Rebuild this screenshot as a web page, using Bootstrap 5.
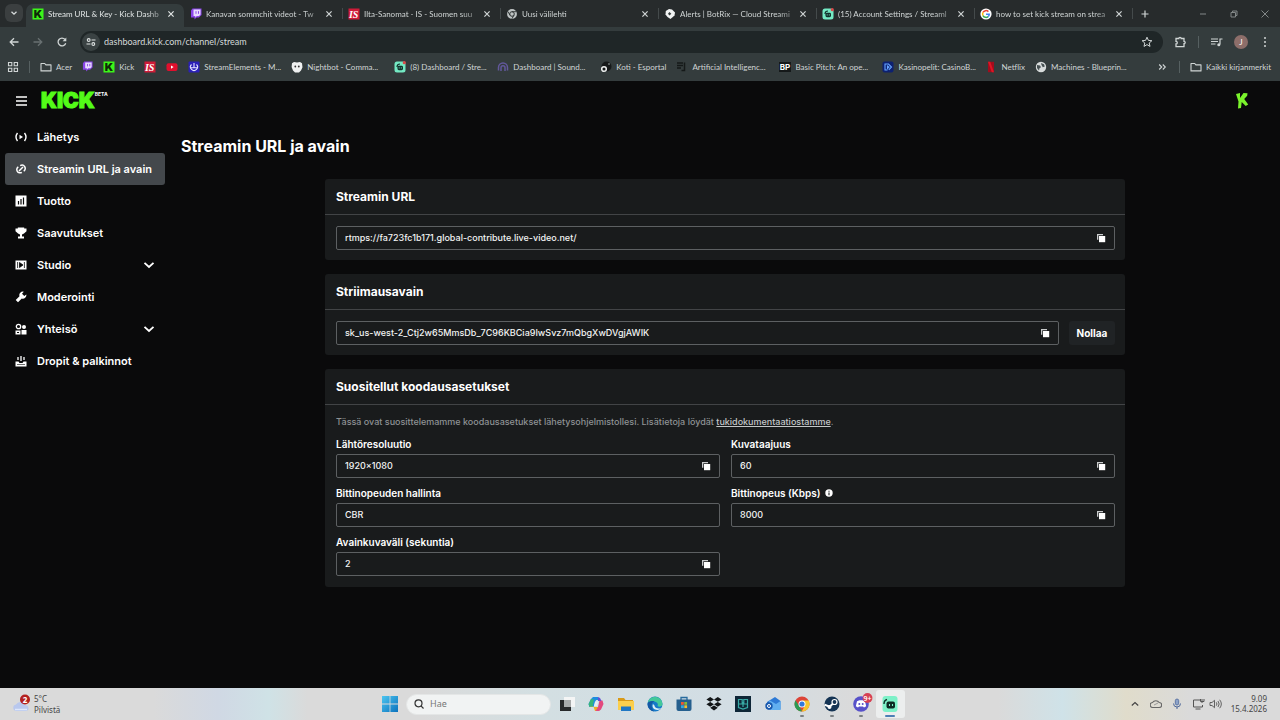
<!DOCTYPE html>
<html lang="fi" data-bs-theme="dark">
<head>
<meta charset="utf-8">
<meta name="viewport" content="width=device-width, initial-scale=1">
<title>Stream URL &amp; Key - Kick Dashboard</title>
<link href="https://cdn.jsdelivr.net/npm/bootstrap@5.3.0/dist/css/bootstrap.min.css" rel="stylesheet">
<style>
  :root { --chrome-font: Lato, "Noto Sans", sans-serif; --ui-font: Inter, "Liberation Sans", sans-serif; }
  body { background: #0a0a0b; color: #fff; font-family: var(--ui-font); font-size: 12px; line-height: 16px; }
  svg { display: block; flex: none; }
  button { background: none; border: 0; padding: 0; color: inherit; }
  a { color: inherit; text-decoration: none; }

  /* Browser window */
  .browser { font-family: var(--chrome-font); font-size: 8px; line-height: 14px; color: #d0d5d5; background: #343c3d; }
  .tabstrip { background: #272b2c; height: 27px; padding-left: 5px; }
  .tab-search { width: 18px; height: 18px; border-radius: 6px; background: #3b3f40; margin-right: 3px; }
  .browser-tab { flex: 0 1 158px; height: 23px; padding: 0 7px 4px 6px; gap: 4px; margin-top: 4px; position: relative; min-width: 0; }
  .browser-tab + .browser-tab:not(.after-active)::before,
  .new-tab::before { content: ""; position: absolute; left: 0; top: 4px; height: 11px; width: 1px; background: #444a4b; }
  .browser-tab.current { background: #343c3d; border-radius: 7px 7px 0 0; color: #e2e6e6; }
  .tab-title { flex: 1; min-width: 0; overflow: hidden; white-space: nowrap; -webkit-mask-image: linear-gradient(90deg, #000 86%, #0006); mask-image: linear-gradient(90deg, #000 86%, #0006); }
  .new-tab { position: relative; width: 25px; height: 19px; margin-top: 4px; }
  .win-controls { color: #838888; gap: 19px; padding-right: 9px; height: 27px; }
  .toolbar-row { height: 30px; padding: 0 9px 0 8px; }
  .nav-btns { gap: 12px; width: 72px; }
  .omnibox { height: 22px; border-radius: 11px; background: #1f2627; gap: 4px; padding: 0 10px 0 2px; }
  .omnibox input { background: none; border: 0; outline: 0; padding: 0; color: #d5dada; font-size: 9px; flex: 1; min-width: 0; }
  .site-info { width: 18px; height: 18px; border-radius: 50%; background: #3a4243; }
  .toolbar-end { gap: 11px; padding-left: 11px; }
  .v-rule { width: 1px; height: 12px; background: #566061; }
  .profile { width: 14px; height: 14px; border-radius: 50%; background: #8d6e6a; color: #fff; font-size: 8px; }
  .bookmarks { height: 24px; padding: 0 9px 5px 7px; white-space: nowrap; }
  .bm { display: flex; align-items: center; gap: 4px; flex: none; margin-right: 10px; }
  .bm-icon { margin-right: 10px; }
  .bm-long { width: 103px; margin-right: 0; }

  /* Kick dashboard */
  .dash-top { height: 40px; padding: 0 30px 0 16px; }
  .brand { font-weight: 900; font-size: 21px; line-height: 20px; color: #53fc18; -webkit-text-stroke: 1px #53fc18; margin-left: 14px; }
  .beta { font-size: 5px; line-height: 6px; font-weight: 700; margin-top: 10px; }
  .side { width: 170px; padding: 0 5px; flex: none; }
  .side-link { display: flex; align-items: center; gap: 10px; height: 32px; width: 100%; padding: 0 10px; border-radius: 3px; font-size: 11px; font-weight: 600; white-space: nowrap; }
  .side-link.active { background: #44484c; }
  .page { padding: 14px 0 0 11px; min-width: 0; }
  .page h1 { font-size: 16px; line-height: 22px; font-weight: 700; margin: 0 0 22px; }
  .panel-wrap { padding-right: 11px; }
  .panels { max-width: 800px; gap: 14px; margin: 0 auto; }
  .panel { background: #191b1c; border-radius: 3px; }
  .panel-head { height: 36px; border-bottom: 1px solid #424446; padding: 0 11px; }
  .panel-head h2 { font-size: 12px; line-height: 16px; font-weight: 700; margin: 0; }
  .panel-body { padding: 11px 10px 10px 11px; }
  .field { height: 24px; border: 1px solid #5d6062; border-radius: 2px; padding: 0 8px; }
  .field input { flex: 1; min-width: 0; background: none; border: 0; outline: 0; padding: 0; color: #f2f3f3; font-size: 9px; line-height: 14px; font-weight: 500; }
  .key-row { display: flex; gap: 10px; }
  .reset-btn { width: 46px; height: 24px; border-radius: 3px; background: #202325; font-size: 10px; font-weight: 700; }
  .hint { font-size: 9px; line-height: 12px; font-weight: 500; color: #8e9294; margin: 0 0 10px; }
  .hint a { color: #c4c7c8; text-decoration: underline; }
  .settings { display: grid; grid-template-columns: 1fr 1fr; gap: 9px 11px; padding-bottom: 1px; }
  .settings label { display: flex; align-items: center; gap: 4px; font-size: 10px; line-height: 12px; font-weight: 600; margin-bottom: 4px; }

  /* Windows taskbar */
  .taskbar { height: 32px; font-family: "Noto Sans", sans-serif; color: #454545; display: grid; grid-template-columns: 1fr auto 1fr; align-items: center;
    background: linear-gradient(90deg, #dadada 0, #dadada 12%, #d0d8e4 17%, #cfe2e6 21%, #dadada 24%, #dadada 33%, #d3dfe2 42%, #d2dde4 58%, #dadada 67%, #dadada 78%, #cfe2e8 83%, #e0dccb 88%, #dadada 93%); }
  .weather { padding-left: 12px; gap: 4px; font-size: 8px; line-height: 11px; }
  .task-search { width: 145px; height: 21px; border-radius: 11px; background: #f1f3f3; border: 1px solid #e4e6e6; padding: 0 7px; gap: 6px; margin: 0 1px 0 2px; }
  .task-search input { background: none; border: 0; outline: 0; padding: 0; font-size: 9px; line-height: 14px; color: #555; width: 100px; }
  .task-search input::placeholder { color: #777; opacity: 1; }
  .apps { width: 353px; }
  .app-btn { flex: 1; height: 28px; display: flex; align-items: center; justify-content: center; position: relative; }
  .app-btn.running::after { content: ""; position: absolute; bottom: 1px; width: 4px; height: 2px; border-radius: 1px; background: #7b8083; }
  .app-btn.focused { background: #eceeee; border-radius: 3px; }
  .app-btn.focused::after { width: 10px; background: #4d7fb5; }
  .start-btn { width: 29px; height: 28px; }
  .tray { gap: 9px; padding-right: 13px; }
  .clock { font-size: 8px; line-height: 10px; }
</style>
</head>
<body class="d-flex flex-column min-vh-100">

<svg width="0" height="0" class="position-absolute" aria-hidden="true">
  <symbol id="i-x" viewBox="0 0 12 12"><path d="M3.400 3.400l5.200 5.200M8.600 3.400L3.400 8.600" stroke="currentColor" stroke-width="1.200"/></symbol>
  <symbol id="i-folder" viewBox="0 0 12 12"><path d="M1 2.500h3.700l1.200 1.400H11v6H1z" fill="none" stroke="currentColor" stroke-width="1.100" stroke-linejoin="round"/></symbol>
  <symbol id="i-twitch" viewBox="0 0 12 12"><path d="M2.500.5H11.500V7L8.800 9.500H6.500L4.500 11.500V9.500H1V2.500z" fill="#8a45e8"/><path d="M3.500 1.500h7v5L9 8H6.800L5.300 9.400V8H3.500z" fill="#e9dcff"/><path d="M6 3.200v2.600M8.500 3.200v2.600" stroke="#8a45e8"/></symbol>
  <symbol id="i-slabs" viewBox="0 0 12 12"><rect x=".5" y=".5" width="11" height="11" rx="2.500" fill="#74eac4"/><path d="M3 6c0-2 1.200-3 3-3" fill="none" stroke="#12312c" stroke-width="1.200"/><rect x="3.500" y="4.800" width="5.500" height="4.400" rx="1.400" fill="#12312c"/><path d="M5.200 6.300v1.200M7.300 6.300v1.200" stroke="#74eac4" stroke-width=".8"/><circle cx="10.300" cy="1.700" r="1.600" fill="#d94a4a"/></symbol>
  <symbol id="i-copy" viewBox="0 0 10 10"><path d="M1 6.800V1h6v1.200H2.300v4.600z" fill="#c9cbcc"/><rect x="3" y="3" width="6.200" height="6.200" fill="#fff"/></symbol>
  <symbol id="i-chev" viewBox="0 0 12 12"><path d="M1.500 3.800L6 8l4.500-4.200" fill="none" stroke="#fff" stroke-width="1.800"/></symbol>
</svg>

<header class="browser">
  <div class="tabstrip d-flex align-items-start">
    <button class="tab-search d-flex align-items-center justify-content-center mt-1" aria-label="Hae välilehdistä"><svg width="8" height="8" viewBox="0 0 8 8"><path d="M1.500 2.800L4 5.200l2.500-2.400" fill="none" stroke="#d8dcdc" stroke-width="1.300"/></svg></button>
    <a href="#" class="browser-tab current d-flex align-items-center"><svg width="12" height="12" viewBox="0 0 12 12"><rect x=".5" y=".5" width="11" height="11" fill="#3cf51a"/><text x="6" y="10" text-anchor="middle" font-family="Inter" font-weight="900" font-size="11" fill="#102808">K</text></svg><span class="tab-title">Stream URL &amp; Key - Kick Dashb</span><svg width="12" height="12"><use href="#i-x"/></svg></a>
    <a href="#" class="browser-tab after-active d-flex align-items-center"><svg width="12" height="12"><use href="#i-twitch"/></svg><span class="tab-title">Kanavan sommchit videot - Tw</span><svg width="12" height="12"><use href="#i-x"/></svg></a>
    <a href="#" class="browser-tab d-flex align-items-center"><svg width="12" height="12" viewBox="0 0 12 12"><rect x=".5" y=".5" width="11" height="11" fill="#cf1b38"/><text x="5.700" y="9.600" text-anchor="middle" font-family="Liberation Serif" font-style="italic" font-weight="700" font-size="10" fill="#fff">IS</text></svg><span class="tab-title">Ilta-Sanomat - IS - Suomen suu</span><svg width="12" height="12"><use href="#i-x"/></svg></a>
    <a href="#" class="browser-tab d-flex align-items-center"><svg width="12" height="12" viewBox="0 0 12 12"><circle cx="6" cy="6" r="4.900" fill="#bfc4c4"/><circle cx="6" cy="6" r="2.300" fill="#bfc4c4" stroke="#2d3232"/><path d="M6 3.700h4.300M4 7.200L1.900 3.500M8 7.200l-2.200 3.700" stroke="#2d3232" stroke-width=".9"/></svg><span class="tab-title">Uusi välilehti</span><svg width="12" height="12"><use href="#i-x"/></svg></a>
    <a href="#" class="browser-tab d-flex align-items-center"><svg width="12" height="12" viewBox="0 0 12 12"><path d="M5 1l3 .6 3 3-.5 3L6.500 11 3.500 9 1.500 6.500 1.800 3z" fill="#f1f3f3"/><path d="M5.500 4l1.800 1.800L5.500 7.500 4 5.800z" fill="#343a3a"/></svg><span class="tab-title">Alerts | BotRix — Cloud Streami</span><svg width="12" height="12"><use href="#i-x"/></svg></a>
    <a href="#" class="browser-tab d-flex align-items-center"><svg width="12" height="12"><use href="#i-slabs"/></svg><span class="tab-title">(15) Account Settings / Streaml</span><svg width="12" height="12"><use href="#i-x"/></svg></a>
    <a href="#" class="browser-tab d-flex align-items-center"><svg width="12" height="12" viewBox="0 0 12 12"><circle cx="6" cy="6" r="5.600" fill="#fff"/><g fill="none" stroke-width="1.500"><path d="M8.400 3.600A3.400 3.400 0 0 0 3 4.400" stroke="#ea4335"/><path d="M3 4.400a3.400 3.400 0 0 0 0 3.200" stroke="#fbbc05"/><path d="M3 7.600a3.400 3.400 0 0 0 5.200 1" stroke="#34a853"/><path d="M8.200 8.600A3.400 3.400 0 0 0 9.300 6.200H6" stroke="#4285f4"/></g></svg><span class="tab-title">how to set kick stream on strea</span><svg width="12" height="12"><use href="#i-x"/></svg></a>
    <button class="new-tab d-flex align-items-center justify-content-center" aria-label="Uusi välilehti"><svg width="10" height="10" viewBox="0 0 10 10"><path d="M5 1.500v7M1.500 5h7" stroke="currentColor" stroke-width="1.200"/></svg></button>
    <div class="win-controls d-flex align-items-center ms-auto">
      <button aria-label="Pienennä"><svg width="12" height="12" viewBox="0 0 12 12"><path d="M3 6h6" stroke="currentColor"/></svg></button>
      <button aria-label="Palauta"><svg width="12" height="12" viewBox="0 0 12 12"><path d="M3 4.500h4.500V9H3zM4.500 4.500V3H9v4.500H7.500" fill="none" stroke="currentColor"/></svg></button>
      <button aria-label="Sulje"><svg width="12" height="12" viewBox="0 0 12 12"><path d="M2.500 2.500l7 7M9.500 2.500l-7 7" stroke="currentColor"/></svg></button>
    </div>
  </div>

  <div class="toolbar-row d-flex align-items-center">
    <div class="nav-btns d-flex align-items-center">
      <button aria-label="Takaisin"><svg width="12" height="12" viewBox="0 0 12 12"><path d="M10.500 6H2.500M6 2.200L2.200 6 6 9.800" fill="none" stroke="currentColor" stroke-width="1.300"/></svg></button>
      <button aria-label="Eteenpäin"><svg width="12" height="12" viewBox="0 0 12 12"><path d="M1.500 6h8M6 2.200L9.800 6 6 9.800" fill="none" stroke="#687071" stroke-width="1.300"/></svg></button>
      <button aria-label="Lataa uudelleen"><svg width="12" height="12" viewBox="0 0 12 12"><path d="M9.700 7.200A3.900 3.900 0 1 1 9 3.500" fill="none" stroke="currentColor" stroke-width="1.300"/><path d="M10.300 1.500v3.700H6.600z" fill="currentColor"/></svg></button>
    </div>
    <div class="omnibox d-flex align-items-center flex-grow-1">
      <button class="site-info d-flex align-items-center justify-content-center" aria-label="Sivuston tiedot"><svg width="10" height="10" viewBox="0 0 10 10"><g fill="none" stroke="#dfe3e3" stroke-width="1.100"><path d="M5.500 3H9.500M.5 7H4.500"/><circle cx="2.700" cy="3" r="1.400"/><circle cx="7.300" cy="7" r="1.400"/></g></svg></button>
      <input type="text" aria-label="Osoite" value="dashboard.kick.com/channel/stream">
      <button aria-label="Lisää kirjanmerkki"><svg width="12" height="12" viewBox="0 0 12 12"><path d="M6 1.200l1.400 3.200 3.500.3-2.700 2.300.8 3.400L6 8.600 3 10.400 3.800 7 1.100 4.700l3.500-.3z" fill="none" stroke="currentColor"/></svg></button>
    </div>
    <div class="toolbar-end d-flex align-items-center">
      <button aria-label="Laajennukset"><svg width="13" height="12" viewBox="0 0 13 12"><path d="M2 2.500h2.800a1.200 1.200 0 0 1 2.400 0H10v2.800a1.200 1.200 0 0 1 0 2.400v3H2V8a1.300 1.300 0 0 0 0-2.600z" fill="none" stroke="currentColor" stroke-width="1.300"/></svg></button>
      <span class="v-rule"></span>
      <button aria-label="Median hallinta"><svg width="13" height="12" viewBox="0 0 13 12"><path d="M1 3h7M1 5.500h7M1 8h4.500M10 8.500V3h2.500" fill="none" stroke="currentColor" stroke-width="1.200"/><circle cx="8.800" cy="8.700" r="1.500" fill="currentColor"/></svg></button>
      <button class="profile" aria-label="Profiili">J</button>
      <button aria-label="Valikko"><svg width="12" height="12" viewBox="0 0 12 12" fill="currentColor"><circle cx="6" cy="2" r="1"/><circle cx="6" cy="6" r="1"/><circle cx="6" cy="10" r="1"/></svg></button>
    </div>
  </div>

  <nav class="bookmarks d-flex align-items-center" aria-label="Kirjanmerkit">
    <a href="#" class="bm bm-icon" aria-label="Sovellukset"><svg width="12" height="12" viewBox="0 0 12 12"><path d="M1.500 1.500h3.300v3.300H1.500zM7.200 1.500h3.300v3.300H7.200zM1.500 7.200h3.300v3.300H1.500zM7.200 7.200h3.300v3.300H7.200z" fill="none" stroke="currentColor" stroke-width="1.100"/></svg></a>
    <span class="v-rule bm-icon"></span>
    <a href="#" class="bm"><svg width="12" height="12"><use href="#i-folder"/></svg>Acer</a>
    <a href="#" class="bm bm-icon" aria-label="Twitch"><svg width="11" height="11"><use href="#i-twitch"/></svg></a>
    <a href="#" class="bm"><svg width="12" height="12" viewBox="0 0 12 12"><rect x=".5" y=".5" width="11" height="11" fill="#3cf51a"/><text x="6" y="10" text-anchor="middle" font-family="Inter" font-weight="900" font-size="11" fill="#102808">K</text></svg>Kick</a>
    <a href="#" class="bm bm-icon" aria-label="Ilta-Sanomat"><svg width="12" height="12" viewBox="0 0 12 12"><rect x=".5" y=".5" width="11" height="11" fill="#cf1b38"/><text x="5.700" y="9.600" text-anchor="middle" font-family="Liberation Serif" font-style="italic" font-weight="700" font-size="10" fill="#fff">IS</text></svg></a>
    <a href="#" class="bm bm-icon" aria-label="YouTube"><svg width="12" height="12" viewBox="0 0 12 12"><rect x=".5" y="2.200" width="11" height="7.800" rx="2" fill="#e00f2d"/><path d="M5 4.500v3.200l2.600-1.600z" fill="#fff"/></svg></a>
    <a href="#" class="bm bm-long"><svg width="12" height="12" viewBox="0 0 12 12"><rect x=".5" y=".5" width="11" height="11" rx="1" fill="#2b20b8"/><path d="M6 2v5M3.500 3.500a3.500 3.500 0 1 0 5 0M3 6.800h6" fill="none" stroke="#e6e4ff" stroke-width="1.100"/></svg>StreamElements - M...</a>
    <a href="#" class="bm bm-long"><svg width="12" height="12" viewBox="0 0 12 12"><path d="M1 2.200L3 1l3 .6L9 1l2 1.200.5 4L10 9.500 8 11.500H4L2 9.500.6 6z" fill="#eff1f1"/><circle cx="4.300" cy="5.500" r=".9" fill="#333"/><circle cx="7.800" cy="5.500" r=".9" fill="#333"/></svg>Nightbot - Comma...</a>
    <a href="#" class="bm bm-long"><svg width="12" height="12"><use href="#i-slabs"/></svg>(8) Dashboard / Stre...</a>
    <a href="#" class="bm bm-long"><svg width="12" height="12" viewBox="0 0 12 12"><path d="M1.500 9.500V6.500a4.500 4.500 0 0 1 9 0v3M4 10V6.800a2 2 0 0 1 4 0V10" fill="none" stroke="#62589c" stroke-width="1.500"/></svg>Dashboard | Sound...</a>
    <a href="#" class="bm"><svg width="12" height="12" viewBox="0 0 12 12"><circle cx="6.500" cy="5.500" r="5" fill="#16191a"/><circle cx="4" cy="8" r="2.300" fill="none" stroke="#eceeee" stroke-width="1.500"/><circle cx="9" cy="3" r="1" fill="#6d7474"/></svg>Koti - Esportal</a>
    <a href="#" class="bm bm-long"><svg width="12" height="12" viewBox="0 0 12 12"><path d="M1 2h6M1 4.500h6M1 7h4M8.500 1.500v8H5.500" fill="none" stroke="#151919" stroke-width="1.500"/></svg>Artificial Intelligenc...</a>
    <a href="#" class="bm bm-long"><svg width="12" height="12" viewBox="0 0 12 12"><rect y="1" width="12" height="10" fill="#15191a"/><text x="6" y="9" text-anchor="middle" font-family="Inter" font-weight="700" font-size="8" fill="#fff">BP</text></svg>Basic Pitch: An ope...</a>
    <a href="#" class="bm bm-long"><svg width="12" height="12" viewBox="0 0 12 12"><rect x=".5" y=".5" width="11" height="11" rx="2" fill="#0d2170"/><path d="M5.500 9H3V3h3.500L9.500 6 6.800 8.800M5.500 5v2.500L7 6z" fill="none" stroke="#67a5ff" stroke-width="1.100"/></svg>Kasinopelit: CasinoB...</a>
    <a href="#" class="bm"><svg width="12" height="12" viewBox="0 0 12 12"><path d="M3 .8h6v10.400H3z" fill="#a30c1c"/><path d="M3 .8h2.200L9 11.200H6.800z" fill="#df1525"/></svg>Netflix</a>
    <a href="#" class="bm"><svg width="12" height="12" viewBox="0 0 12 12"><circle cx="6" cy="6" r="5.200" fill="#d7dbdb"/><path d="M2 4l3 .5 1 1.700-1.500 1L4 9.500 2 7zM6 2l3 1.200.8 2.300-2 .8L6.500 4z" fill="#465052"/></svg>Machines - Blueprin...</a>
    <button class="ms-auto me-2 px-1" aria-label="Lisää kirjanmerkkejä"><svg width="9" height="10" viewBox="0 0 9 10"><path d="M1.200 2.500L3.700 5 1.200 7.500M4.800 2.500L7.300 5 4.800 7.500" fill="none" stroke="currentColor" stroke-width="1.100"/></svg></button>
    <span class="v-rule bm-icon"></span>
    <a href="#" class="bm me-0"><svg width="12" height="12"><use href="#i-folder"/></svg>Kaikki kirjanmerkit</a>
  </nav>
</header>

<div class="dash-top d-flex align-items-center">
  <button aria-label="Valikko"><svg width="11" height="10" viewBox="0 0 11 10"><path d="M0 1h11M0 5h11M0 9h11" stroke="#fff" stroke-width="1.400"/></svg></button>
  <a href="#" class="brand">KICK</a><span class="beta align-self-start">BETA</span>
  <button class="ms-auto" aria-label="Käyttäjä"><svg width="16" height="18" viewBox="0 0 16 18"><path d="M2 2l4-1v5l3.500-5 4 .3-.3 2.500-3 3.200 4 5.500-2.500 1.500-4-4-.7 6-3 .6.500-7z" fill="#7af32c"/></svg></button>
</div>

<div class="d-flex flex-grow-1">
  <nav class="side" aria-label="Hallintapaneeli">
    <a href="#" class="side-link"><svg width="12" height="12" viewBox="0 0 12 12"><path d="M2.500 2Q-.5 6 2.500 10M9.500 2q3 4 0 8" fill="none" stroke="#fff" stroke-width="1.400"/><path d="M4.500 3.800v4.400L8 6z" fill="#fff"/></svg>Lähetys</a>
    <a href="#" class="side-link active" aria-current="page"><svg width="12" height="12" viewBox="0 0 12 12"><g fill="none" stroke="#fff" stroke-width="1.500"><path d="M5.200 2.700A3.200 3.200 0 1 1 8.700 8.200M6.800 9.300A3.200 3.200 0 1 1 3.300 3.800M4 8l4-4"/></g></svg>Streamin URL ja avain</a>
    <a href="#" class="side-link"><svg width="12" height="12" viewBox="0 0 12 12"><rect x=".5" y=".5" width="11" height="11" fill="#fff"/><path d="M3.500 6v3.500M6 4v5.500M8.500 2.500v7" stroke="#0a0b0b" stroke-width="1.200"/></svg>Tuotto</a>
    <a href="#" class="side-link"><svg width="12" height="12" viewBox="0 0 12 12"><path d="M2.800.6h6.400v1h2.300v2.600L9 6.500 7 7.500v2h2v1.900H3V9.500h2v-2L3 6.500.5 4.200V1.600h2.300z" fill="#fff"/></svg>Saavutukset</a>
    <button class="side-link"><svg width="12" height="12" viewBox="0 0 12 12"><path d="M.5 1.500h11v9H.5z" fill="#fff"/><path d="M2.600 3v6M9.400 3v6M4.500 3.500v5L8 6z" stroke="#0a0b0b" fill="#0a0b0b" stroke-width=".8"/></svg>Studio<svg class="ms-auto" width="12" height="12"><use href="#i-chev"/></svg></button>
    <a href="#" class="side-link"><svg width="12" height="12" viewBox="0 0 12 12"><path d="M11.300 3.500a3.500 3.500 0 0 1-4.500 4L3 11.300.7 9l3.800-3.800a3.500 3.500 0 0 1 4.300-4.500L7 2.700 9.300 5z" fill="#fff"/></svg>Moderointi</a>
    <button class="side-link"><svg width="12" height="12" viewBox="0 0 12 12"><circle cx="3.500" cy="3.500" r="2.200" fill="none" stroke="#fff" stroke-width="1.300"/><circle cx="9" cy="4" r="2" fill="#fff"/><path d="M.5 7.500h5v4h-5zM6.500 7h5v4.500h-5z" fill="#fff"/><path d="M2 9.500h2" stroke="#0a0b0b"/></svg>Yhteisö<svg class="ms-auto" width="12" height="12"><use href="#i-chev"/></svg></button>
    <a href="#" class="side-link"><svg width="12" height="12" viewBox="0 0 12 12"><path d="M.5 6.500h3l1 1.500h3l1-1.500h3v5H.5z" fill="#fff"/><path d="M6 1v5M3 2v3M9 2v3" stroke="#fff" stroke-width="1.300"/><path d="M2 9.500h8" stroke="#0a0b0b" stroke-width=".6"/></svg>Dropit &amp; palkinnot</a>
  </nav>

  <main class="page flex-grow-1">
    <h1>Streamin URL ja avain</h1>
    <div class="panel-wrap">
    <div class="panels d-flex flex-column">
      <section class="panel">
        <div class="panel-head d-flex align-items-center"><h2>Streamin URL</h2></div>
        <div class="panel-body">
          <div class="field d-flex align-items-center"><input type="text" aria-label="Streamin URL" readonly value="rtmps://fa723fc1b171.global-contribute.live-video.net/"><button aria-label="Kopioi"><svg width="10" height="10"><use href="#i-copy"/></svg></button></div>
        </div>
      </section>
      <section class="panel">
        <div class="panel-head d-flex align-items-center"><h2>Striimausavain</h2></div>
        <div class="panel-body key-row">
          <div class="field d-flex align-items-center flex-grow-1"><input type="text" aria-label="Striimausavain" readonly value="sk_us-west-2_Ctj2w65MmsDb_7C96KBCia9IwSvz7mQbgXwDVgjAWIK"><button aria-label="Kopioi"><svg width="10" height="10"><use href="#i-copy"/></svg></button></div>
          <button class="reset-btn">Nollaa</button>
        </div>
      </section>
      <section class="panel">
        <div class="panel-head d-flex align-items-center"><h2>Suositellut koodausasetukset</h2></div>
        <div class="panel-body">
          <p class="hint">Tässä ovat suosittelemamme koodausasetukset lähetysohjelmistollesi. Lisätietoja löydät <a href="#">tukidokumentaatiostamme</a>.</p>
          <div class="settings">
            <div><label for="res">Lähtöresoluutio</label><div class="field d-flex align-items-center"><input id="res" type="text" readonly value="1920×1080"><button aria-label="Kopioi"><svg width="10" height="10"><use href="#i-copy"/></svg></button></div></div>
            <div><label for="fps">Kuvataajuus</label><div class="field d-flex align-items-center"><input id="fps" type="text" readonly value="60"><button aria-label="Kopioi"><svg width="10" height="10"><use href="#i-copy"/></svg></button></div></div>
            <div><label for="rc">Bittinopeuden hallinta</label><div class="field d-flex align-items-center"><input id="rc" type="text" readonly value="CBR"></div></div>
            <div><label for="br">Bittinopeus (Kbps) <svg width="8" height="8" viewBox="0 0 8 8"><circle cx="4" cy="4" r="3.700" fill="#fff"/><path d="M4 1.700v1M4 3.500v2.800" stroke="#191b1c" stroke-width="1.100"/></svg></label><div class="field d-flex align-items-center"><input id="br" type="text" readonly value="8000"><button aria-label="Kopioi"><svg width="10" height="10"><use href="#i-copy"/></svg></button></div></div>
            <div><label for="kf">Avainkuvaväli (sekuntia)</label><div class="field d-flex align-items-center"><input id="kf" type="text" readonly value="2"><button aria-label="Kopioi"><svg width="10" height="10"><use href="#i-copy"/></svg></button></div></div>
          </div>
        </div>
      </section>
    </div>
    </div>
  </main>
</div>

<footer class="taskbar">
  <div class="weather d-flex align-items-center">
    <svg width="18" height="20" viewBox="0 0 18 20"><path d="M4 17a3.300 3.300 0 0 1 0-6.500A5 5 0 0 1 13 11a3 3 0 0 1 1 6z" fill="#b9c8ee"/><path d="M3 15.500h12" stroke="#dfe8fb" stroke-width="1.500"/><circle cx="13" cy="5.500" r="5" fill="#b3201f"/><text x="13" y="8.500" text-anchor="middle" font-family="Noto Sans" font-weight="700" font-size="8" fill="#fff">2</text></svg>
    <div><div>5°C</div><div>Pilvistä</div></div>
  </div>
  <div class="d-flex align-items-center">
    <button class="start-btn d-flex align-items-center justify-content-center" aria-label="Käynnistä"><svg width="16" height="16" viewBox="0 0 16 16"><defs><linearGradient id="win" x2="1" y2="1"><stop stop-color="#4cc5f0"/><stop offset="1" stop-color="#0b72bd"/></linearGradient></defs><path d="M0 0h7.600v7.600H0zM8.400 0H16v7.600H8.400zM0 8.400h7.600V16H0zM8.400 8.400H16V16H8.400z" fill="url(#win)"/></svg></button>
    <div class="task-search d-flex align-items-center"><svg width="10" height="10" viewBox="0 0 10 10"><circle cx="4.500" cy="4.300" r="3.500" fill="none" stroke="#333" stroke-width="1.200"/><path d="M7 6.900L9.500 9.500" stroke="#333" stroke-width="1.200"/></svg><input type="search" aria-label="Hae" placeholder="Hae"></div>
    <div class="apps d-flex">
      <button class="app-btn" aria-label="Tehtävänäkymä"><svg width="16" height="16" viewBox="0 0 16 16"><rect x="5" y="1" width="11" height="10" fill="#f4f5f5"/><rect x="1" y="4" width="11" height="11" fill="#28292a"/><rect x="5" y="4" width="7" height="7" fill="#a9abab"/></svg></button>
      <button class="app-btn" aria-label="Copilot"><svg width="16" height="16" viewBox="0 0 16 16"><path d="M5 1h5l1.500 3H8L5.500 11H1.500L.5 8 3 3z" fill="#1e8de0"/><path d="M.6 8L3 3l3 .5L4.500 11h-3z" fill="#37b57a"/><path d="M1.500 10.500h4L7 15h4l1.500-4H8.500z" fill="#f0ae22"/><path d="M11.500 4.500h3L15.500 8 13 13.500 11 15H7.500L10 11z" fill="#e3497e"/><path d="M10 1l2 1 1.500 3H10z" fill="#6550d2"/><path d="M7 5.500h3L9 10H6z" fill="#e6edf3"/></svg></button>
      <button class="app-btn" aria-label="Resurssienhallinta"><svg width="16" height="16" viewBox="0 0 16 16"><path d="M0 2h6l1.500 2H15v10H0z" fill="#d99a17"/><path d="M0 5h16v9H0z" fill="#fbcf4d"/><path d="M3 10.500h10V15H3z" fill="#1f77c4"/></svg></button>
      <button class="app-btn" aria-label="Edge"><svg width="16" height="16" viewBox="0 0 16 16"><circle cx="8" cy="8" r="7.500" fill="#1679c8"/><path d="M.6 7A7.500 7.500 0 0 1 15.500 8c0 2.500-3.500 3.500-5 2 1-2 0-4-3-4.500C4 5 1.500 6 .6 7z" fill="#43c89a"/><path d="M6 8c-1.500 3 1 6 4.500 6 1.500 0 3-.8 4-2-3 1.500-7 0-7-2.500z" fill="#dceef5"/><path d="M.5 8C1 5 5 4.500 7.500 5.500 4 6 3.500 11 7 15.500A7.500 7.500 0 0 1 .5 8z" fill="#1459a5"/></svg></button>
      <button class="app-btn" aria-label="Microsoft Store"><svg width="16" height="16" viewBox="0 0 16 16"><path d="M5 4V1.500h6V4" fill="none" stroke="#276b9e" stroke-width="1.300"/><path d="M.5 3.500h15V13a2 2 0 0 1-2 2h-11a2 2 0 0 1-2-2z" fill="#255f8e"/><path d="M5 6h2.800v2.800H5z" fill="#ef5632"/><path d="M8.300 6h2.800v2.800H8.300z" fill="#86b93a"/><path d="M5 9.300h2.800v2.800H5z" fill="#32a8e0"/><path d="M8.300 9.300h2.800v2.800H8.300z" fill="#f6bd2b"/></svg></button>
      <button class="app-btn" aria-label="Dropbox"><svg width="16" height="16" viewBox="0 0 16 16"><path d="M4.200 1L8 3.400 4.200 5.800.4 3.400zM11.800 1l3.800 2.400-3.800 2.400L8 3.400zM4.200 5.900L8 8.300l-3.800 2.400L.4 8.300zM11.800 5.900l3.800 2.400-3.800 2.400L8 8.300zM8 9.500l3.800 2.300L8 14.500l-3.800-2.700z" fill="#121517"/></svg></button>
      <button class="app-btn" aria-label="Peli"><svg width="16" height="16" viewBox="0 0 16 16"><rect width="16" height="16" fill="#0e2637"/><path d="M3.500 3.500h3.700V8H3.500zM8.800 3.500h3.700V8H8.800zM3.500 8v3.500L8 13l4.500-1.500V8M8 6v5" fill="none" stroke="#38aaa6" stroke-width="1.200"/></svg></button>
      <button class="app-btn" aria-label="Outlook"><svg width="16" height="16" viewBox="0 0 16 16"><path d="M2 6l8-5 5.500 4v8.500H3z" fill="#2d7ad6"/><path d="M4 4l7 4 4.500-3v9H5z" fill="#61aff0"/><circle cx="4" cy="10" r="3.700" fill="#1758ad"/><circle cx="4" cy="10" r="1.500" fill="none" stroke="#fff"/></svg></button>
      <button class="app-btn running" aria-label="Chrome"><svg width="16" height="16" viewBox="0 0 16 16"><circle cx="8" cy="8" r="7.500" fill="#dc4437"/><path d="M1.500 4.300L6 11.500l2 4A7.500 7.500 0 0 1 1.500 4.300z" fill="#2b9c53"/><path d="M8 4.500h6.700A7.500 7.500 0 0 1 7.700 15.500L11.200 9z" fill="#f5c62f"/><circle cx="8" cy="8" r="3.500" fill="#fff"/><circle cx="8" cy="8" r="2.600" fill="#3178dc"/></svg></button>
      <button class="app-btn running" aria-label="Steam"><svg width="16" height="16" viewBox="0 0 16 16"><circle cx="8" cy="8" r="7.500" fill="#153454"/><path d="M.6 8.700l5 2 4-3.700" fill="none" stroke="#fff" stroke-width="2"/><circle cx="10.500" cy="6" r="2.500" fill="#153454" stroke="#fff" stroke-width="1.200"/><circle cx="5.500" cy="11" r="2" fill="#fff"/></svg></button>
      <button class="app-btn running" aria-label="Discord"><svg width="24" height="22" viewBox="0 0 24 22"><circle cx="12" cy="11" r="7.800" fill="#5751c9"/><path d="M8 8.200l2.500-.9h3l2.500.9 1.200 5-2.200 1.200-1-1h-4l-1 1-2.200-1.200z" fill="#fff"/><circle cx="10.300" cy="11" r="1" fill="#5751c9"/><circle cx="13.700" cy="11" r="1" fill="#5751c9"/><circle cx="18.500" cy="5" r="4.900" fill="#d73f52"/><text x="18.500" y="7.500" text-anchor="middle" font-family="Noto Sans" font-weight="600" font-size="7" fill="#fff">9+</text></svg></button>
      <button class="app-btn running focused" aria-label="Streamlabs"><svg width="16" height="16" viewBox="0 0 16 16"><rect x=".5" width="15" height="16" rx="3" fill="#7df1c8"/><path d="M2 8c0-2.500 1-4 3-4.500" fill="none" stroke="#10352c" stroke-width="1.400"/><rect x="4.500" y="5.500" width="8.500" height="7" rx="2" fill="#0d2822"/><path d="M7.500 8v2M10.500 8v2" stroke="#7df1c8" stroke-width="1.100"/></svg></button>
    </div>
  </div>
  <div class="tray d-flex align-items-center justify-content-end">
    <svg width="12" height="12" viewBox="0 0 12 12"><path d="M2.800 7.500L6 4.500l3.200 3" fill="none" stroke="#444" stroke-width="1.200"/></svg>
    <svg width="12" height="12" viewBox="0 0 12 12"><path d="M3 9.500A2.500 2.500 0 0 1 2.500 4.500a4 4 0 0 1 6.700 0 2.500 2.500 0 0 1 0 5z" fill="none" stroke="#666" stroke-width="1.100"/><path d="M4 7l4-2" stroke="#999"/></svg>
    <svg width="12" height="12" viewBox="0 0 12 12"><rect x="4.300" y="1" width="3.400" height="6" rx="1.700" fill="#8da3c9" stroke="#4d679a" stroke-width=".8"/><path d="M2.500 5.500a3.500 3.500 0 0 0 7 0M6 9v2" fill="none" stroke="#4d679a"/></svg>
    <div class="d-flex align-items-center gap-1">
      <svg width="13" height="12" viewBox="0 0 13 12"><path d="M8 2H1.500v7h9V7M3.500 11h5M10 1v4M12 1v2.500H8.500V1" fill="none" stroke="#555"/></svg>
      <svg width="13" height="12" viewBox="0 0 13 12"><path d="M1 4.500h2L5.500 2.300v7.400L3 7.500H1zM7.300 4.300q1.300 1.700 0 3.400M9 3q2.300 3 0 6M10.700 1.800q3.300 4.200 0 8.400" fill="none" stroke="#555" stroke-width=".9"/></svg>
    </div>
    <div class="clock text-end"><div>9.09</div><div>15.4.2026</div></div>
  </div>
</footer>
<script src="https://cdn.jsdelivr.net/npm/bootstrap@5.3.0/dist/js/bootstrap.bundle.min.js"></script>
</body>
</html>
